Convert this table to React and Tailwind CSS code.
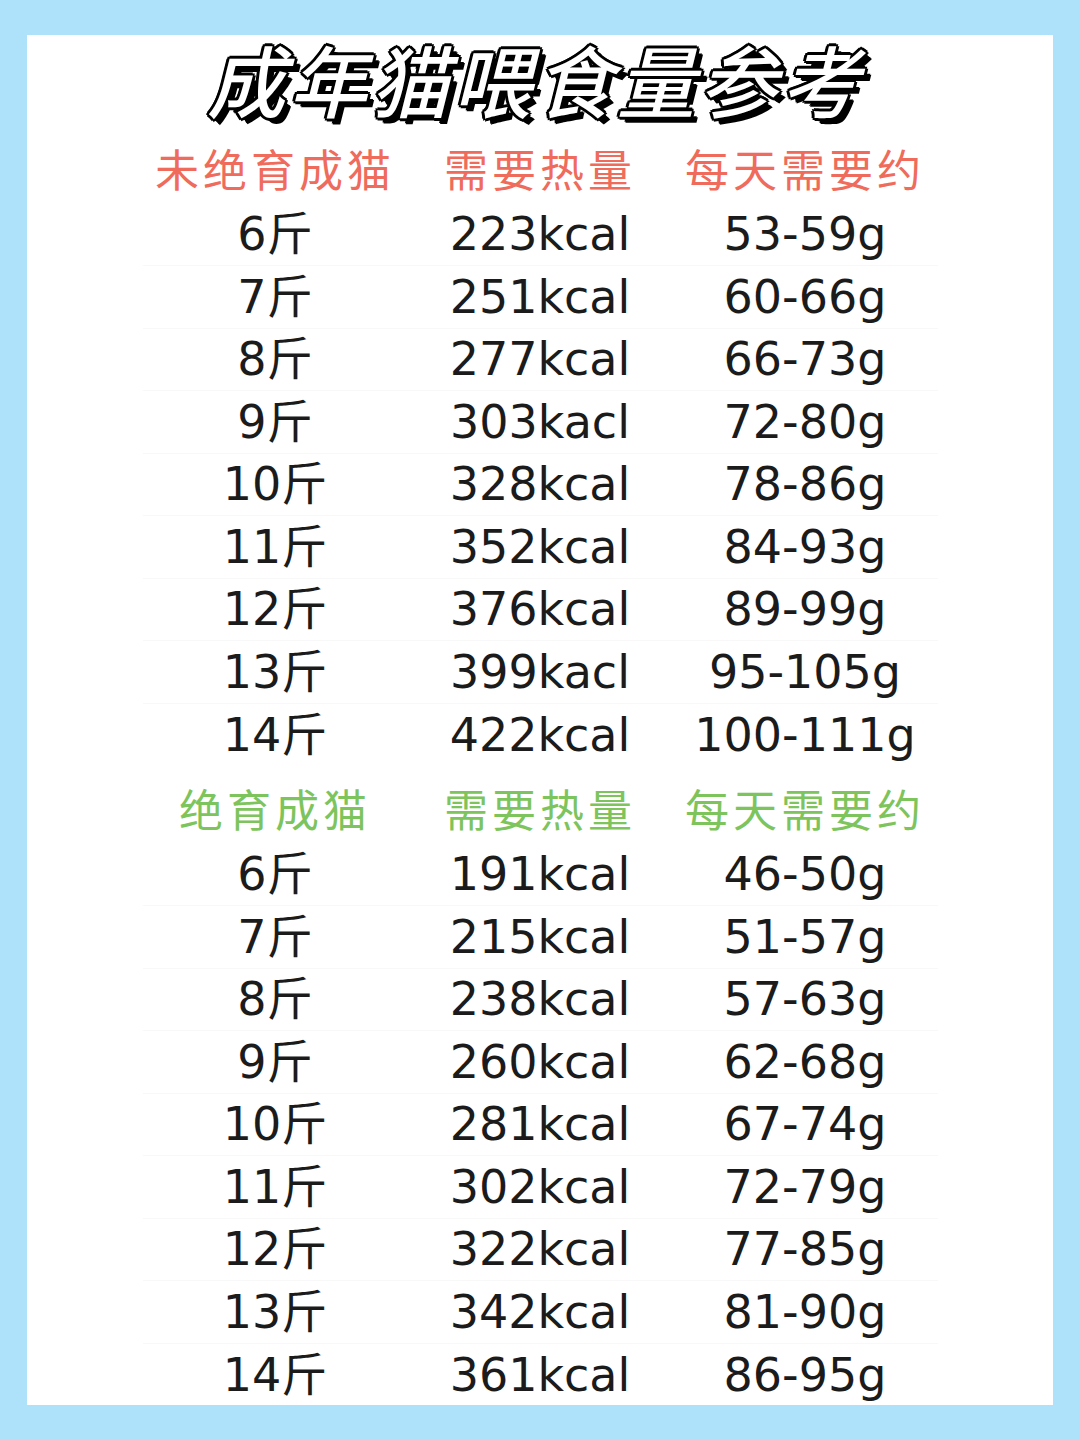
const unneutered = [
  ["6斤", "223kcal", "53-59g"],
  ["7斤", "251kcal", "60-66g"],
  ["8斤", "277kcal", "66-73g"],
  ["9斤", "303kacl", "72-80g"],
  ["10斤", "328kcal", "78-86g"],
  ["11斤", "352kcal", "84-93g"],
  ["12斤", "376kcal", "89-99g"],
  ["13斤", "399kacl", "95-105g"],
  ["14斤", "422kcal", "100-111g"],
];

const neutered = [
  ["6斤", "191kcal", "46-50g"],
  ["7斤", "215kcal", "51-57g"],
  ["8斤", "238kcal", "57-63g"],
  ["9斤", "260kcal", "62-68g"],
  ["10斤", "281kcal", "67-74g"],
  ["11斤", "302kcal", "72-79g"],
  ["12斤", "322kcal", "77-85g"],
  ["13斤", "342kcal", "81-90g"],
  ["14斤", "361kcal", "86-95g"],
];

const Header = ({ cols, color }) => (
  <div className={`grid grid-cols-3 h-[62.5px] items-center text-center text-[44px] tracking-[4px] ${color}`}>
    {cols.map((c) => (
      <span key={c} className="leading-none">{c}</span>
    ))}
  </div>
);

const Rows = ({ rows }) => (
  <div>
    {rows.map((r, i) => (
      <div
        key={r[0]}
        className={`grid grid-cols-3 h-[62.5px] items-center text-center text-[46px] text-[#1b1b1b] ${
          i < rows.length - 1 ? "border-b border-[#f8f8f8]" : ""
        }`}
      >
        {r.map((c, j) => (
          <span key={j} className="leading-none">{c}</span>
        ))}
      </div>
    ))}
  </div>
);

export default function App() {
  return (
    <div
      className="w-[1080px] h-[1440px] bg-[#aee1fa] pt-[35px] px-[27px]"
      style={{ fontFamily: '"DejaVu Sans", "Noto Sans CJK SC", sans-serif' }}
    >
      <div className="bg-white h-[1370px]">
        <h1
          className="h-[86px] flex items-center justify-center pr-[10px] text-[78px] font-medium italic text-white leading-none tracking-[4px] [text-shadow:3px_0_0_#000,-3px_0_0_#000,0_3px_0_#000,0_-3px_0_#000,2px_2px_0_#000,-2px_2px_0_#000,2px_-2px_0_#000,-2px_-2px_0_#000,5px_5px_0_#000,6px_6px_0_#000]"
          style={{ fontFamily: '"Noto Sans CJK SC", sans-serif' }}
        >
          成年猫喂食量参考
        </h1>
        <div className="w-[795px] mx-auto mt-[20px]">
          <Header cols={["未绝育成猫", "需要热量", "每天需要约"]} color="text-[#ef6b5b]" />
          <Rows rows={unneutered} />
          <div className="h-[15px]" />
          <Header cols={["绝育成猫", "需要热量", "每天需要约"]} color="text-[#7dc45c]" />
          <Rows rows={neutered} />
        </div>
      </div>
    </div>
  );
}
